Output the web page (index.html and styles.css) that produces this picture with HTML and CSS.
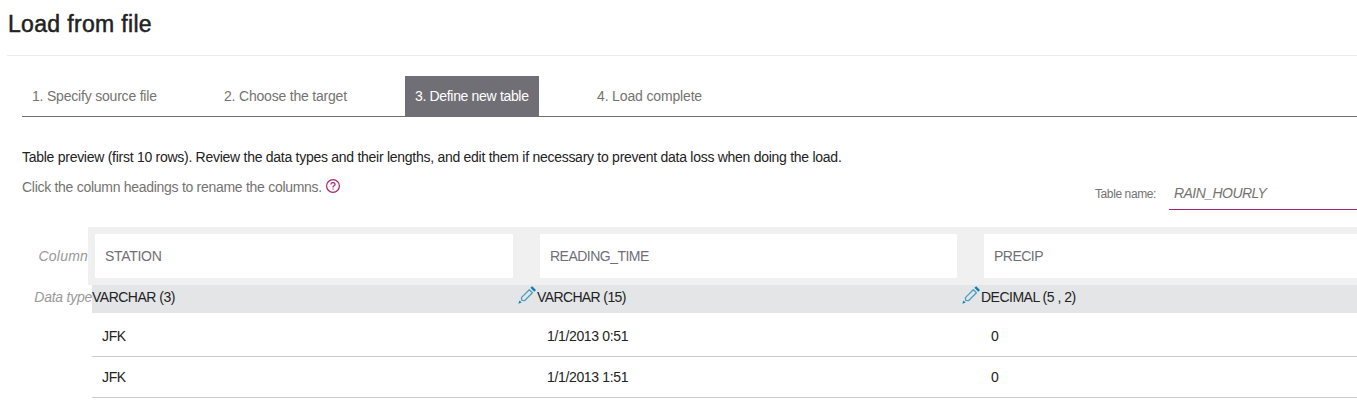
FILE: index.html
```html
<!DOCTYPE html>
<html lang="en">
<head>
<meta charset="utf-8">
<title>Load from file</title>
<link rel="stylesheet" href="styles.css">
</head>
<body>
<svg class="symbols" aria-hidden="true">
  <symbol id="pencil" viewBox="0 0 18 18">
    <path fill="none" stroke="#4a9fbd" stroke-width="1.3" stroke-linejoin="round" d="M3.4 11.6 11.3 3.7 14.4 6.8 6.5 14.7 3.8 14.3Z"/>
    <path fill="#0f7fae" d="M12.4 1.8 14.2.2 18 4 16.3 5.7ZM1.5 14.4 3.6 16.5.3 17.7Z"/>
  </symbol>
</svg>
<header class="header"><h1 class="title">Load from file</h1></header>
<main class="main">
  <nav class="tabs">
    <a class="tab">1. Specify source file</a>
    <a class="tab">2. Choose the target</a>
    <a class="tab active">3. Define new table</a>
    <a class="tab">4. Load complete</a>
  </nav>
  <div class="info">
    <div class="notes">
      <p class="note dark">Table preview (first 10 rows). Review the data types and their lengths, and edit them if necessary to prevent data loss when doing the load.</p>
      <p class="note hint"><span>Click the column headings to rename the columns.</span>
        <svg class="help" viewBox="0 0 14 14"><circle cx="7" cy="7" r="6.4" fill="none" stroke="#a6266e" stroke-width="1.2"/><path d="M4.9 5.5Q5 3.7 7 3.7T9.1 5.3Q9.1 6.2 8 6.8T7 8.5M7 9.5V10.6" fill="none" stroke="#a6266e" stroke-width="1.3"/></svg>
      </p>
    </div>
    <div class="name"><label class="name-label">Table name:</label><div class="name-field">RAIN_HOURLY</div></div>
  </div>
</main>
<section class="preview">
  <div class="row-label column-label">Column</div>
  <div class="heads">
    <div class="head station">STATION</div>
    <div class="head">READING_TIME</div>
    <div class="head">PRECIP</div>
  </div>
  <div class="row-label type-label">Data type</div>
  <div class="types">
    <div class="type"><span>VARCHAR (3)</span><svg class="pencil"><use href="#pencil"/></svg></div>
    <div class="type varchar"><span>VARCHAR (15)</span><svg class="pencil"><use href="#pencil"/></svg></div>
    <div class="type"><span>DECIMAL (5 , 2)</span></div>
  </div>
  <div class="values"><span>JFK</span><span>1/1/2013 0:51</span><span>0</span></div>
  <div class="values"><span>JFK</span><span>1/1/2013 1:51</span><span>0</span></div>
</section>
</body>
</html>
```
FILE: styles.css
```css
* { box-sizing: border-box; }
body { margin: 0; height: 405px; overflow: hidden; background: #fff; color: #747370; font: 14px/20px "Liberation Sans", Arial, sans-serif; white-space: nowrap; }
.symbols { display: none; }
.header { height: 56px; margin-left: 7px; border-bottom: 1px solid #ececec; }
.title { margin: 0; padding: 9px 0 0 1px; font-size: 23px; line-height: 30px; font-weight: 400; color: #222; letter-spacing: .33px; -webkit-text-stroke: .5px #222; }
.main { padding: 20px 0 0 22px; }
.tabs { display: grid; grid-template-columns: 192px 191px 192px 1fr; height: 41px; border-bottom: 1px solid #706f76; }
.tab { display: block; height: 40px; padding: 10px; letter-spacing: -.2px; }
.tab:nth-child(4) { margin-left: -10px; letter-spacing: -.15px; }
.active { width: 134px; background: #706f76; color: #fff; letter-spacing: -.33px; }
.info { display: flex; height: 110px; }
.notes { padding-top: 30px; width: 1073px; }
.note { margin: 0 0 10px; height: 20px; display: flex; align-items: center; }
.dark { color: #222; letter-spacing: -.272px; }
.hint { letter-spacing: -.285px; }
.help { width: 14px; height: 14px; margin: -2px 0 0 4px; }
.name { display: flex; padding-top: 67px; height: 93px; }
.name-label { width: 74px; font-size: 12px; letter-spacing: -.4px; }
.name-field { width: 188px; height: 26px; padding-left: 5px; border-bottom: 1px solid #a6266e; font-style: italic; letter-spacing: -.55px; line-height: 19px; }
.preview { display: grid; grid-template-columns: 88px 1fr; grid-template-rows: 58px 28px 44px 41px; }
.row-label { font-style: italic; color: #999; text-align: right; letter-spacing: -.25px; }
.column-label { padding-top: 19px; letter-spacing: .2px; }
.type-label { padding-top: 2px; margin-right: -4px; }
.heads { display: grid; grid-template-columns: 418px 417px 418px; column-gap: 27px; background: #f0f0f0; padding: 7px; overflow: hidden; }
.head { background: #fff; padding: 12px 10px; color: #706f76; letter-spacing: -.52px; }
.station { letter-spacing: -.3px; }
.types { margin-left: 4px; display: grid; grid-template-columns: 445px 444px 1fr; background: #e4e5e7; color: #222; letter-spacing: -.5px; }
.type { display: flex; justify-content: space-between; padding-top: 2px; }
.varchar { letter-spacing: -.62px; }
.pencil { width: 18px; height: 18px; margin: -1px 1px 0; }
.values { grid-column: 2; margin-left: 4px; display: grid; grid-template-columns: 445px 444px 1fr; border-bottom: 1px solid #ccc; padding: 13px 10px 0; color: #222; letter-spacing: -.35px; }
.values + .values { padding-top: 10px; }
```
